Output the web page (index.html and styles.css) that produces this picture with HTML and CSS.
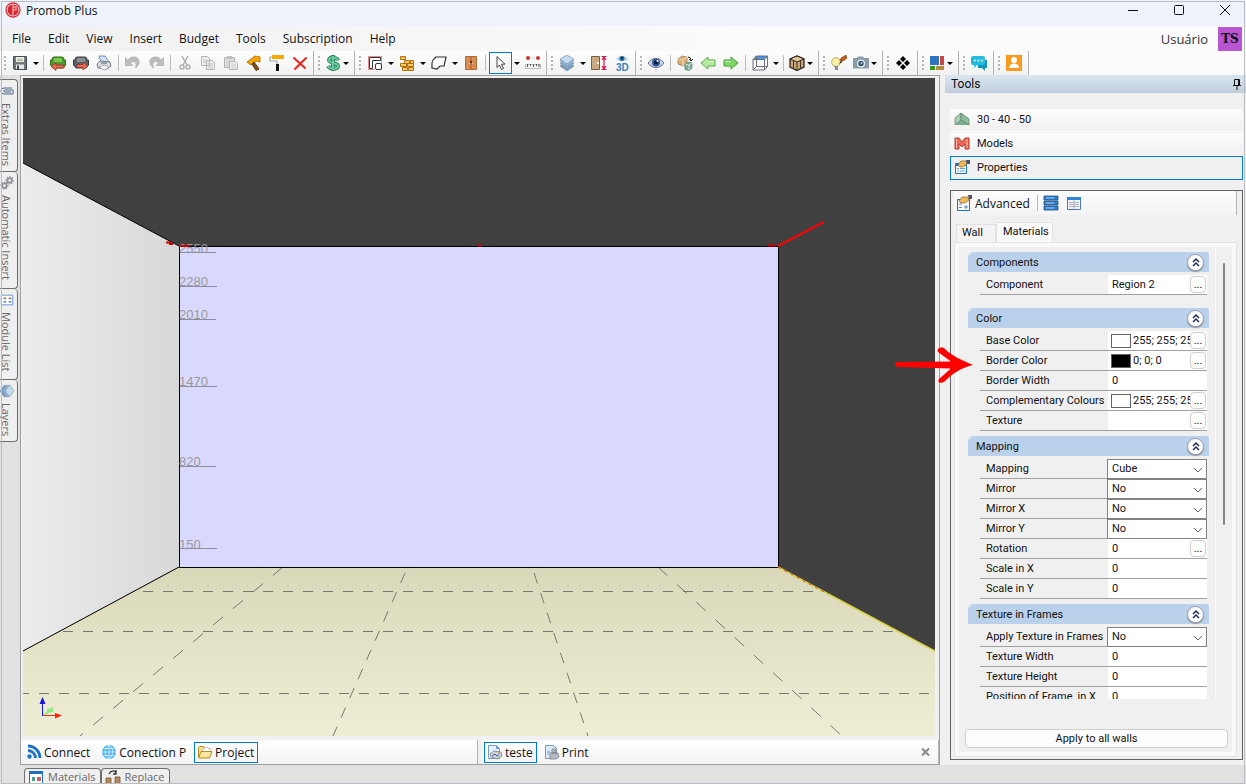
FILE: index.html
```
<!DOCTYPE html>
<html lang="en">
<head>
    <meta charset="UTF-8">
    <meta name="viewport" content="width=device-width, initial-scale=1.0">
    <title>Promob Plus</title>
    <link rel="stylesheet" href="styles.css">
</head>
<body>
    <div class="window">
        <header class="titlebar">
            <svg class="logo" viewBox="0 0 16 16"><circle cx="8" cy="8" r="7" fill="#fbe9ea" stroke="#d8303a" stroke-width="1.3"/><circle cx="8" cy="8" r="5.5" fill="#d9242f"/><path d="M8 3v10M8 5h3v3H8" fill="none" stroke="#f7b9bc" stroke-width="1.2"/></svg>
            <span class="title">Promob Plus</span>
            <div class="window-buttons">
                <button class="win-btn" aria-label="Minimize"><svg viewBox="0 0 12 12"><path d="M1 6.500h10" stroke="#111"/></svg></button>
                <button class="win-btn" aria-label="Maximize"><svg viewBox="0 0 12 12"><rect x="1.500" y="1.500" width="9" height="9" rx="1" fill="none" stroke="#111"/></svg></button>
                <button class="win-btn" aria-label="Close"><svg viewBox="0 0 12 12"><path d="M1 1l10 10M11 1L1 11" stroke="#111"/></svg></button>
            </div>
        </header>

        <div class="menubar">
            <nav class="menu">
                <button>File</button>
                <button>Edit</button>
                <button>View</button>
                <button>Insert</button>
                <button>Budget</button>
                <button>Tools</button>
                <button>Subscription</button>
                <button>Help</button>
            </nav>
            <div class="user">
                <span>Usuário</span>
                <span class="avatar">TS</span>
            </div>
        </div>

        <div class="toolbar">
            <div class="group">
                <i class="grip"></i>
                <button class="tool" aria-label="Save"><svg viewBox="0 0 16 16"><path d="M1.500 1.500h13v13h-12l-1-1z" fill="#70787c" stroke="#454d50"/><path d="M4 2h8v5H4z" fill="#f2f4e8"/><path d="M5 4h6M5 5.500h6" stroke="#a5aa9b"/><path d="M4 9.500h8V14H4z" fill="#e3e7e6"/><path d="M5 10.500h2V14H5z" fill="#3e464a"/></svg></button>
                <button class="caret" aria-label="Save options"></button>
                <i class="sep"></i>
                <button class="tool" aria-label="Import"><svg viewBox="0 0 16 16"><path d="M4 2h8q2 0 2 3h1.500v5L13 13H3L.5 10V5H2q0-3 2-3z" fill="#4d9b2e" stroke="#2e6a18"/><path d="M4 3h8v4H4z" fill="#7cc84d"/><path d="M1 11.500l5-4v2.500h8v3H6v2.500z" fill="#e56a50" stroke="#962d1d" stroke-width=".7"/></svg></button>
                <button class="tool" aria-label="Export"><svg viewBox="0 0 16 16"><path d="M4 2h8q2 0 2 3h1.500v5L13 13H3L.5 10V5H2q0-3 2-3z" fill="#5c6064" stroke="#3a3d40"/><path d="M4 3h8v4H4z" fill="#8b9095"/><path d="M15 11l-5-4v2.500H4v3h6V15z" fill="#ea6c55" stroke="#962d1d" stroke-width=".7"/></svg></button>
                <button class="tool" aria-label="Print"><svg viewBox="0 0 16 16"><path d="M3 1h6l4 6H5z" fill="#cfe1f7" stroke="#7590b8"/><path d="M1 9l3-3 10 1 1 4-4 3-9-1z" fill="#d6d9dd" stroke="#7c8289"/><path d="M3 12l6-2 4 3-5 2z" fill="#f8f9fa" stroke="#8e959b" stroke-width=".7"/><path d="M5 8h6" stroke="#606870"/></svg></button>
                <i class="sep"></i>
                <button class="tool" aria-label="Undo"><svg viewBox="0 0 16 16"><path d="M0 2.500v8h8L5.500 8c3-3 7-1.500 5 5 6-4 4.500-12-3-11-2 .3-3.500 1.500-4.700 3z" fill="#bcbcbc" stroke="#a5a5a5" stroke-width=".6"/></svg></button>
                <button class="tool" aria-label="Redo"><svg viewBox="0 0 16 16"><path d="M16 2.500v8H8L10.500 8c-3-3-7-1.500-5 5-6-4-4.500-12 3-11 2 .3 3.500 1.500 4.700 3z" fill="#bcbcbc" stroke="#a5a5a5" stroke-width=".6"/></svg></button>
                <i class="sep"></i>
                <button class="tool" aria-label="Cut"><svg viewBox="0 0 16 16"><path d="M5 1l5 9M11 1L6 10" stroke="#b0b0b0" stroke-width="1.500"/><circle cx="5" cy="12" r="2" fill="none" stroke="#b0b0b0" stroke-width="1.500"/><circle cx="11" cy="12" r="2" fill="none" stroke="#b0b0b0" stroke-width="1.500"/></svg></button>
                <button class="tool" aria-label="Copy"><svg viewBox="0 0 16 16"><path d="M1.500 1.500h6l2 2v7h-8zM6.500 5.500h6l2 2v7h-8z" fill="#ececec" stroke="#b5b5b5"/><path d="M3 5h3M3 7h3M8 9h5M8 11h5M8 13h5" stroke="#c8c8c8"/></svg></button>
                <button class="tool" aria-label="Paste"><svg viewBox="0 0 16 16"><path d="M1.500 2.500h10v10h-10z" fill="#d9d9d9" stroke="#b5b5b5"/><path d="M4 1h5v3H4z" fill="#c0c0c0"/><path d="M6.500 6.500h6l2 2v6h-8z" fill="#f1f1f1" stroke="#b5b5b5"/><path d="M8 9h5M8 11h5M8 13h5" stroke="#c8c8c8"/></svg></button>
                <button class="tool" aria-label="Hammer"><svg viewBox="0 0 16 16"><path d="M1 7l8-6 5 1v5l-4-1-5 4z" fill="#f0a608" stroke="#c27a00"/><path d="M8 7l5 7-3 1.500L6 9z" fill="#7c4e1c" stroke="#5a3510"/></svg></button>
                <button class="tool" aria-label="Paint roller"><svg viewBox="0 0 16 16"><path d="M3 0h12v4H3z" fill="#f7a900"/><path d="M3 2H1v4h7v4" fill="none" stroke="#a4a9ad" stroke-width="1.200"/><path d="M7 9h3v7H7z" fill="#111"/></svg></button>
                <button class="tool" aria-label="Delete"><svg viewBox="0 0 16 16"><path d="M2 3l11 10M14 3L3 14" stroke="#ee2018" stroke-width="1.900" stroke-linecap="round"/></svg></button>
            </div>
            <div class="group">
                <i class="grip"></i>
                <button class="tool drop" aria-label="Prices"><svg viewBox="0 0 16 16"><path d="M13 5.500C12 2 4 1.500 4 5s9 2.500 9 6-8 3.500-10 0M8 0v16" fill="none" stroke="#2f8a62" stroke-width="4"/><path d="M13 5.500C12 2 4 1.500 4 5s9 2.500 9 6-8 3.500-10 0M8 1v14" fill="none" stroke="#6cc69c" stroke-width="2"/></svg></button>
            </div>
            <div class="group">
                <i class="grip"></i>
                <button class="tool" aria-label="Walls"><svg viewBox="0 0 16 16"><path d="M1 1.500h14M1.500 1v14M14.500 1v14M1 14.500h7" stroke="#e29090"/><path d="M2.500 13.500v-11h11v3H5.500v8z" fill="#fff" stroke="#333"/><rect x="8.500" y="8.500" width="6" height="6" rx="1.500" fill="#fff" stroke="#333"/></svg></button>
                <button class="caret" aria-label="Wall options"></button>
                <button class="tool" aria-label="Bricks"><svg viewBox="0 0 16 16"><path d="M1.500 1.500h5v3h-5zM5.500 5.500h5v3h-5zM11.500 5.500h3v3h-3zM1.500 8.500h6v3h-6zM8.500 8.500h6v3h-6zM3.500 12.500h5v3h-5zM9.500 12.500h5v3h-5z" fill="#fbc665" stroke="#b0700c"/></svg></button>
                <button class="caret" aria-label="Brick options"></button>
                <button class="tool" aria-label="Shape"><svg viewBox="0 0 16 16"><path d="M5 2h10l-2 9H9l-3 3-5-1v-5c0-3 2-4 4-6z" fill="#fff" stroke="#333" stroke-width="1.200"/></svg></button>
                <button class="caret" aria-label="Shape options"></button>
                <button class="tool" aria-label="Cabinet"><svg viewBox="0 0 16 16"><path d="M2.500 1.500h11v13h-11z" fill="#d88c53" stroke="#b26b36"/><path d="M8 2v12" stroke="#9d5a2b"/><path d="M6 8h1M9 8h1" stroke="#fff"/><circle cx="8" cy="7" r="1.300" fill="#5e3417"/></svg></button>
                <i class="sep"></i>
                <button class="tool selected" aria-label="Select"><svg viewBox="0 0 16 16"><path d="M4 1.500v11l2.500-2.500 2 4.500 2-1-2-4.300h3.500z" fill="#fff" stroke="#444"/></svg></button>
                <button class="caret" aria-label="Select options"></button>
                <button class="tool" aria-label="Measure"><svg viewBox="0 0 16 16"><circle cx="3" cy="3" r="2" fill="#c63a34"/><circle cx="13" cy="3" r="2" fill="#c63a34"/><path d="M5 3h6" stroke="#bbb" stroke-dasharray="1 1"/><path d="M.5 9.500h15v4H.500z" fill="#f2f2f2" stroke="#bbb"/><path d="M2.500 9v3M5.500 9v2M8.500 9v3M11.500 9v2M14 9v3" stroke="#555"/></svg></button>
            </div>
            <div class="group">
                <i class="grip"></i>
                <button class="tool" aria-label="Layers"><svg viewBox="0 0 16 16"><g stroke="#6886a6" stroke-width=".6"><path d="M8 7l7 4-7 5-7-5z" fill="#7c9fc4"/><path d="M8 4.500l7 4-7 5-7-5z" fill="#8fb0d1"/><path d="M8 2l7 4-7 5-7-5z" fill="#a3c0dc"/><path d="M8 0l7 4-7 5-7-5z" fill="#c3d9ec"/></g></svg></button>
                <button class="caret" aria-label="Layer options"></button>
                <button class="tool" aria-label="Door height"><svg viewBox="0 0 16 16"><path d="M.5 1.500h8v13h-8z" fill="#c9a981" stroke="#7d5e3c"/><circle cx="7" cy="8" r="1" fill="#fff"/><path d="M10.500 1.500h5M10.500 14.500h5M13 2v12M11 5l2-3 2 3M11 11l2 3 2-3" fill="none" stroke="#cf1747" stroke-width="1.200"/></svg></button>
                <button class="tool" aria-label="3D view"><svg viewBox="0 0 16 16"><path d="M2 4c3-4 9-4 12 0-3 3-9 3-12 0z" fill="#bdd6e8"/><circle cx="8" cy="3.500" r="2.500" fill="#27699b"/><circle cx="8" cy="3" r="1" fill="#123"/><text x="2" y="15.500" class="icon-text">3D</text></svg></button>
            </div>
            <div class="group">
                <i class="grip"></i>
                <button class="tool" aria-label="Visibility"><svg viewBox="0 0 16 16"><path d="M0 8c4-6 12-6 16 0-4 6-12 6-16 0z" fill="#c9d5e6" stroke="#67748c"/><circle cx="8" cy="7.500" r="4" fill="#2e589e"/><circle cx="8" cy="7.500" r="2" fill="#0b1633"/><circle cx="9.500" cy="6" r="1" fill="#fff"/></svg></button>
                <i class="sep"></i>
                <button class="tool" aria-label="Rotate modules"><svg viewBox="0 0 16 16"><path d="M1 4l4-3 5 1v6l-4 3-5-2z" fill="#d8b07a" stroke="#98723d" stroke-width=".7"/><path d="M1 4l5 1 4-3M6 5v6" fill="none" stroke="#f3dcb6"/><path d="M8 9l3-2 4 1v5l-3 2.500-4-1z" fill="#7fae98" stroke="#4c7964" stroke-width=".7"/><path d="M8 9l4 1 3-2M12 10v5" fill="none" stroke="#c8e3d6"/><path d="M11 2q3 0 3 3M12 4l2 2 2-2" fill="none" stroke="#222"/></svg></button>
                <button class="tool" aria-label="Previous"><svg viewBox="0 0 16 16"><path d="M1 8l7-6v3h7v6H8v3z" fill="#b5e8a0" stroke="#5bb045"/><path d="M8.500 6.500H14" stroke="#dff7d3"/></svg></button>
                <button class="tool" aria-label="Next"><svg viewBox="0 0 16 16"><path d="M15 8L8 2v3H1v6h7v3z" fill="#7ed766" stroke="#45a035"/><path d="M2 6.500h6" stroke="#c5efb6"/></svg></button>
                <i class="sep"></i>
                <button class="tool" aria-label="Perspective"><svg viewBox="0 0 16 16"><path d="M4 1h11.500l-3 3.500H1z" fill="#3f97ea"/><path d="M1 4.500L4.500 1h11v10.500l-3 3.500H1zM1 4.500h11.500V15M12.500 4.500l3-3.500M4.500 1v10.500h11M1 15l3.500-3.500" fill="none" stroke="#6b7178"/></svg></button>
                <button class="caret" aria-label="Perspective options"></button>
                <i class="sep"></i>
                <button class="tool drop" aria-label="Render mode"><svg viewBox="0 0 16 16"><path d="M1 4l7-3 7 3v8l-7 3.500L1 12z" fill="#c9a57a" stroke="#2c241c" stroke-width="1.300"/><path d="M1 4l7 3 7-3-7-3z" fill="#e2c79f" stroke="#2c241c"/><path d="M8 7v8M4.500 5.500V14M11.500 5.500V14" stroke="#4b3a28"/></svg></button>
            </div>
            <div class="group">
                <i class="grip"></i>
                <button class="tool" aria-label="Lighting"><svg viewBox="0 0 16 16"><circle cx="5" cy="7" r="4.300" fill="#fbf0a0" stroke="#b6ae72"/><path d="M3.500 11h3.500v4h-3z" fill="#8c8c8c"/><path d="M9 6l1-3 5-3 1 3-4 3z" fill="#c25b14" stroke="#7a3606" stroke-width=".6"/><path d="M8 9l2-3 1.500 1z" fill="#222"/></svg></button>
                <button class="tool drop" aria-label="Camera"><svg viewBox="0 0 16 16"><path d="M0 3h4l1-1.500h5L11 3h5v10.500H0z" fill="#8a9da7"/><circle cx="8" cy="8.500" r="4" fill="#e5edf0"/><circle cx="8" cy="8.500" r="2.700" fill="#36536b"/><circle cx="8.500" cy="8" r="1" fill="#b9d6e9"/></svg></button>
            </div>
            <div class="group">
                <i class="grip"></i>
                <button class="tool" aria-label="Modules"><svg viewBox="0 0 16 16"><path d="M8 1l3 3-3 3-3-3zM4 5l3 3-3 3-3-3zM12 5l3 3-3 3-3-3zM8 9l3 3-3 3-3-3z" fill="#000"/></svg></button>
            </div>
            <div class="group">
                <i class="grip"></i>
                <button class="tool drop" aria-label="Layout"><svg viewBox="0 0 16 16"><path d="M1 1h9v9H1z" fill="#2f74bf"/><path d="M11 1h4v9h-4z" fill="#c84640"/><path d="M1 11h5v4H1z" fill="#37951f"/><path d="M7 11h8v4H7z" fill="#b08b43"/></svg></button>
            </div>
            <div class="group">
                <i class="grip"></i>
                <button class="tool" aria-label="Chat"><svg viewBox="0 0 16 16"><path d="M7 5h9v8h-2v3l-3-3H7z" fill="#1595b8"/><path d="M2 1h10a2 2 0 0 1 2 2v5a2 2 0 0 1-2 2H6l-3 3v-3H2a2 2 0 0 1-2-2V3a2 2 0 0 1 2-2z" fill="#23bbdf"/><path d="M3 5.500h2M6.500 5.500h2M10 5.500h2" stroke="#fff" stroke-width="1.600"/></svg></button>
            </div>
            <div class="group">
                <i class="grip"></i>
                <button class="tool" aria-label="Account"><svg viewBox="0 0 16 16"><path d="M0 0h16v16H0z" fill="#f89a1c"/><circle cx="8" cy="5" r="3" fill="#fff"/><path d="M3 13c0-6 10-6 10 0z" fill="#fff"/></svg></button>
            </div>
        </div>

        <div class="workspace">
            <aside class="rail">
                <button class="side-tab"><svg viewBox="0 0 14 14"><path d="M12 4H4a3 3 0 0 0 0 6h9M13 10V6H5a1 1 0 0 0 0 2h6" fill="none" stroke="#4a6488"/></svg>Extras Items</button>
                <button class="side-tab auto"><svg viewBox="0 0 16 16"><g fill="none" stroke="#8f8f97" stroke-width="2"><circle cx="11" cy="5" r="2.500"/><circle cx="5" cy="11" r="2.500"/></g><g fill="none" stroke="#8f8f97" stroke-width="1.500" stroke-dasharray="1.500 1.500"><circle cx="11" cy="5" r="4"/><circle cx="5" cy="11" r="4"/></g></svg>Automatic Insert</button>
                <button class="side-tab modules"><svg viewBox="0 0 16 16"><path d="M1.500 2.500h13v11h-13z" fill="#fff" stroke="#5b8fcb"/><path d="M4 5h3v2H4zM10 5h3v2h-3z" fill="#9d7d4d"/><path d="M4 10h3M10 10h3" stroke="#6b94bf" stroke-width="2"/></svg>Module List</button>
                <button class="side-tab layers"><svg viewBox="0 0 16 16"><g stroke="#6886a6" stroke-width=".6"><path d="M9 8l-4 7-5-7 5-7z" fill="#7c9fc4"/><path d="M11 8l-4 7-5-7 5-7z" fill="#8fb0d1"/><path d="M13 8l-4 7-5-7 5-7z" fill="#a3c0dc"/><path d="M16 8l-5 7-5-7 5-7z" fill="#c3d9ec"/></g></svg>Layers</button>
            </aside>

            <main class="stage">
                <svg class="scene" viewBox="0 0 912 658" preserveAspectRatio="xMinYMin slice">
                    <defs>
                        <linearGradient id="wall" x1="0" x2="1" y1="0" y2="0">
                            <stop offset="0" stop-color="#ececec"/>
                            <stop offset="1" stop-color="#d8d8d8"/>
                        </linearGradient>
                        <linearGradient id="floor" x1="0" x2="0" y1="0" y2="1">
                            <stop offset="0" stop-color="#d9d8b9"/>
                            <stop offset="1" stop-color="#efeed5"/>
                        </linearGradient>
                        <clipPath id="floor-area"><path d="M156 489h599l157 84v85H0v-85z"/></clipPath>
                    </defs>
                    <rect width="912" height="658" fill="#404040"/>
                    <path d="M0 85l156 83v321L0 573z" fill="url(#wall)"/>
                    <path d="M156 168h599v321H156z" fill="#d9d9ff"/>
                    <path d="M156 489h599l157 84v85H0v-85z" fill="url(#floor)"/>
                    <g clip-path="url(#floor-area)" stroke="#77776f" fill="none">
                        <path d="M0 513.500h912M0 553.500h912" stroke-dasharray="10 10"/>
                        <path d="M-4 615.500h916" stroke-dasharray="10 10"/>
                        <path d="M260 489L57 658M635 489l184 169" stroke-dasharray="13 13"/>
                        <path d="M382 495l-72 163M511 495l54 163" stroke-dasharray="11 10"/>
                    </g>
                    <path d="M0 85l156 83M0 573l156-84" stroke="#000"/>
                    <path d="M156.500 168.500h599v321h-599z" fill="none" stroke="#000"/>
                    <path d="M755 489l157 84" stroke="#d9d23c" stroke-width="1.500"/>
                    <path d="M755 489l50 27" stroke="#e8442c" stroke-dasharray="3 4"/>
                    <g class="levels">
                        <text x="156" y="175">2550</text>
                        <text x="156" y="208">2280</text>
                        <text x="156" y="241">2010</text>
                        <text x="156" y="308">1470</text>
                        <text x="156" y="388">820</text>
                        <text x="156" y="471">150</text>
                    </g>
                    <path d="M157 174.500h36M157 208.500h37M157 241.500h36M157 308.500h37M157 388.500h36M157 470.500h37" stroke="#8f8f99"/>
                    <path d="M143 164.500h5M146 166h4M157 168h9M454 167.500h5M745 167.500h8" stroke="#c00" stroke-width="2"/>
                    <path d="M755 168l46-24" stroke="#f00" stroke-width="2"/>
                    <path d="M21 637l9-7" stroke="#90ee80" stroke-width="2"/>
                    <path d="M24 633l6-1" stroke="#90ee80" stroke-width="4"/>
                    <path d="M19.500 638v-14" stroke="#1414e6"/>
                    <path d="M16.500 626l3-7 3 7z" fill="#1414e6"/>
                    <path d="M20 637.500h14" stroke="#f20"/>
                    <path d="M32 635l7 2.500-7 3z" fill="#f20"/>
                </svg>
                <div class="stage-bar">
                    <div class="strip">
                        <button class="strip-btn"><svg viewBox="0 0 16 16"><circle cx="3.500" cy="12.500" r="2.200" fill="#1d74c5"/><path d="M2 6.500a7.500 7.500 0 0 1 7.500 7.500M2 2a12 12 0 0 1 12 12" fill="none" stroke="#1d74c5" stroke-width="2.800"/></svg>Connect</button>
                        <button class="strip-btn"><svg viewBox="0 0 16 16"><circle cx="8" cy="8" r="7" fill="#54b3e6"/><path d="M1 8h14M8 1v14M2.500 4.500h11M2.500 11.500h11M8 1c-5 4-5 10 0 14M8 1c5 4 5 10 0 14" fill="none" stroke="#d4effc" stroke-width=".8"/></svg>Conection P</button>
                        <button class="strip-btn active"><svg viewBox="0 0 16 16"><path d="M1.500 13V3.500l1-1h4l1.500 2h5V8" fill="#f7dc83" stroke="#ae872a"/><path d="M5 6l5-3 4 3-1 5H5z" fill="#fff" stroke="#aaa" stroke-width=".6"/><path d="M1.500 14L4 7.500h11L12.500 14z" fill="#fbe79b" stroke="#b58b27"/></svg>Project</button>
                    </div>
                    <div class="strip">
                        <button class="strip-btn active"><svg viewBox="0 0 16 16"><path d="M1.500 1.500h8l3 3v10h-11z" fill="#e4effb" stroke="#7d9dc4"/><path d="M9 1l4 4H9z" fill="#739dcb"/><path d="M3 10l4-3 7 1 1 4-4 3-7-2z" fill="#cfd2d6" stroke="#7b7f84" stroke-width=".8"/><path d="M5 12l3-2 2 2 2-1" stroke="#3c62b0" fill="none"/><path d="M11 9h2" stroke="#c77c35"/></svg>teste</button>
                        <button class="strip-btn"><svg viewBox="0 0 16 16"><path d="M1.500 1.500h8l3 3v10h-11z" fill="#dce9f8" stroke="#7d9dc4"/><path d="M8 5h4v4H8zM6 9h8l1 4-3 2H6z" fill="#b6bbc1" stroke="#777d84" stroke-width=".7"/><path d="M3 7h3v4H3z" fill="#a9c5e4"/></svg>Print</button>
                        <button class="strip-close" aria-label="Close view"><svg viewBox="0 0 10 10"><path d="M1 1.500l7 7M8 1.500l-7 7" stroke="#8a8a8a" stroke-width="2"/></svg></button>
                    </div>
                </div>
            </main>

            <aside class="dock">
                <div class="dock-title">
                    <span>Tools</span>
                    <button class="pin" aria-label="Pin"><svg viewBox="0 0 10 12"><path d="M2.500 7V1.500h5V7M1 7.500h8M6.500 1v6M5 8v4" fill="none" stroke="#111"/></svg></button>
                </div>
                <div class="dock-list">
                    <button class="dock-item"><svg viewBox="0 0 16 16"><path d="M1 7l6-5 8 6v6H1z" fill="#7bae8d"/><path d="M1 7l6-5v7l-6 5zM7 9l8 5" fill="#a9cfb6" stroke="#66806d" stroke-width=".7"/><path d="M7 2l8 6v6L7 9z" fill="#8dbf9e" stroke="#66806d" stroke-width=".7"/></svg>30 - 40 - 50</button>
                    <button class="dock-item"><svg viewBox="0 0 16 16"><path d="M1 14V3h4l3 4 3-4h4v11h-4V9l-3 3-3-3v5z" fill="#ec6a55" stroke="#b73b31"/><path d="M2.500 4v9M13 4v9" stroke="#f7b1a2"/></svg>Models</button>
                    <button class="dock-item active"><svg viewBox="0 0 16 16"><path d="M1.500 4.500h11v10h-11z" fill="#fff" stroke="#1c6fc4"/><path d="M2 5h10v2H2z" fill="#1c6fc4"/><path d="M3 9.500h2M6 9.500h5M3 12h2M6 12h5" stroke="#5e9ddd"/><path d="M4 6l3-4h5l1 3-4 3H6z" fill="#edb95b" stroke="#8a6120" stroke-width=".7"/><path d="M12 1h4v4h-3z" fill="#45536b"/></svg>Properties</button>
                </div>

                <section class="panel">
                    <div class="panel-tools">
                        <button class="advanced"><svg viewBox="0 0 16 16"><path d="M1.500 4.500h12v11h-12z" fill="#fff" stroke="#1c6fc4"/><path d="M3 9h3M3 12.500h3M8 12h4M10 10v4" stroke="#3d86d4"/><path d="M3 6l3-4h6l1 3-4 3H5z" fill="#edb95b" stroke="#8a6120" stroke-width=".7"/><path d="M12 0h4v4h-3z" fill="#45536b"/></svg>Advanced</button>
                        <i class="sep"></i>
                        <button class="tool" aria-label="Categorized"><svg viewBox="0 0 16 16"><path d="M1 1h14v4H1zM1 6h14v4H1zM1 11h14v4H1z" fill="#2f83d6" stroke="#2c4d70" stroke-width=".8"/><path d="M3 3h8M3 8h8M3 13h8" stroke="#9cd0ff"/></svg></button>
                        <button class="tool" aria-label="Table view"><svg viewBox="0 0 16 16"><path d="M1.500 2.500h13v12h-13z" fill="#f5f5f5" stroke="#4878a8"/><path d="M1 2h14v3H1z" fill="#2f83d6"/><path d="M3 7.500h10M3 9.500h10M3 11.500h10M8 5v9" stroke="#a8b2bd"/></svg></button>
                    </div>
                    <div class="tabs">
                        <button class="tab">Wall</button>
                        <button class="tab current">Materials</button>
                    </div>
                    <div class="page">
                        <div class="props-area">
                            <div class="props">
                                <section class="props-group wide">
                                    <h2>Components <button class="fold" aria-label="Collapse Components"><svg viewBox="0 0 10 10"><path d="M2 5l3-3 3 3M2 9l3-3 3 3"/></svg></button></h2>
                                    <div class="row"><label for="component">Component</label><div class="value"><input id="component" type="text" value="Region 2"><button class="more">...</button></div></div>
                                </section>
                                <section class="props-group">
                                    <h2>Color <button class="fold" aria-label="Collapse Color"><svg viewBox="0 0 10 10"><path d="M2 5l3-3 3 3M2 9l3-3 3 3"/></svg></button></h2>
                                    <div class="row"><label for="base">Base Color</label><div class="value"><i class="swatch"></i><input id="base" type="text" value="255; 255; 255"><button class="more">...</button></div></div>
                                    <div class="row"><label for="border">Border Color</label><div class="value"><i class="swatch black"></i><input id="border" type="text" value="0; 0; 0"><button class="more">...</button></div></div>
                                    <div class="row"><label for="border-width">Border Width</label><div class="value"><input id="border-width" type="text" value="0"></div></div>
                                    <div class="row"><label for="complementary">Complementary Colours</label><div class="value"><i class="swatch"></i><input id="complementary" type="text" value="255; 255; 255"><button class="more">...</button></div></div>
                                    <div class="row"><label for="texture">Texture</label><div class="value"><input id="texture" type="text" value=""><button class="more">...</button></div></div>
                                </section>
                                <section class="props-group">
                                    <h2>Mapping <button class="fold" aria-label="Collapse Mapping"><svg viewBox="0 0 10 10"><path d="M2 5l3-3 3 3M2 9l3-3 3 3"/></svg></button></h2>
                                    <div class="row"><label for="mapping">Mapping</label><div class="value pick"><select id="mapping"><option>Cube</option></select><svg viewBox="0 0 10 6"><path d="M1 1l4 4 4-4"/></svg></div></div>
                                    <div class="row"><label for="mirror">Mirror</label><div class="value pick"><select id="mirror"><option>No</option><option>Yes</option></select><svg viewBox="0 0 10 6"><path d="M1 1l4 4 4-4"/></svg></div></div>
                                    <div class="row"><label for="mirror-x">Mirror X</label><div class="value pick"><select id="mirror-x"><option>No</option><option>Yes</option></select><svg viewBox="0 0 10 6"><path d="M1 1l4 4 4-4"/></svg></div></div>
                                    <div class="row"><label for="mirror-y">Mirror Y</label><div class="value pick"><select id="mirror-y"><option>No</option><option>Yes</option></select><svg viewBox="0 0 10 6"><path d="M1 1l4 4 4-4"/></svg></div></div>
                                    <div class="row"><label for="rotation">Rotation</label><div class="value"><input id="rotation" type="text" value="0"><button class="more">...</button></div></div>
                                    <div class="row"><label for="scale-x">Scale in X</label><div class="value"><input id="scale-x" type="text" value="0"></div></div>
                                    <div class="row"><label for="scale-y">Scale in Y</label><div class="value"><input id="scale-y" type="text" value="0"></div></div>
                                </section>
                                <section class="props-group">
                                    <h2>Texture in Frames <button class="fold" aria-label="Collapse Texture in Frames"><svg viewBox="0 0 10 10"><path d="M2 5l3-3 3 3M2 9l3-3 3 3"/></svg></button></h2>
                                    <div class="row"><label for="apply-frames">Apply Texture in Frames</label><div class="value pick"><select id="apply-frames"><option>No</option><option>Yes</option></select><svg viewBox="0 0 10 6"><path d="M1 1l4 4 4-4"/></svg></div></div>
                                    <div class="row"><label for="texture-width">Texture Width</label><div class="value"><input id="texture-width" type="text" value="0"></div></div>
                                    <div class="row"><label for="texture-height">Texture Height</label><div class="value"><input id="texture-height" type="text" value="0"></div></div>
                                    <div class="row"><label for="frame-x">Position of Frame, in X</label><div class="value"><input id="frame-x" type="text" value="0"></div></div>
                                </section>
                            </div>
                            <div class="scrollbar"><i class="thumb"></i></div>
                        </div>
                        <button class="apply">Apply to all walls</button>
                    </div>
                </section>
            </aside>

            <svg class="arrow" viewBox="0 0 80 40"><path d="M3 17L57 16.500 44 7C42 3 48 1 51 4c7 7 15 10 28 16-13 3-22 10-29 17-4 2-7 0-5-3l12-10.500L4 22c-4-.5-4-4.500-1-5z" fill="#f00"/></svg>
        </div>

        <footer class="bottom-tabs">
            <button class="bottom-tab"><svg viewBox="0 0 16 16"><path d="M1.500 2.500h13v13h-13z" fill="#fff" stroke="#1c6fc4"/><path d="M1 2h14v3H1z" fill="#1c6fc4"/><path d="M4 8h3v4H4z" fill="#4aa283"/><path d="M9 8h4v4H9z" fill="#d25b5b"/></svg>Materials</button>
            <button class="bottom-tab"><svg viewBox="0 0 16 16"><path d="M1 9h5v6H1zM10 8h5v7h-5z" fill="#b58a5b" stroke="#705030" stroke-width=".8"/><path d="M4 5c2-4 6-4 7-1M11 1v4H8" fill="none" stroke="#333" stroke-width="1.300"/></svg>Replace</button>
        </footer>
    </div>
</body>
</html>
```
FILE: styles.css
```
* {
    box-sizing: border-box;
}

body {
    margin: 0;
    font-family: "Open Sans", "Noto Sans", sans-serif;
    font-size: 12px;
    color: #111;
    background-color: #e1e1e1;
}

button {
    font: inherit;
    color: inherit;
    background: none;
    border: none;
    padding: 0;
    white-space: nowrap;
}

button svg {
    width: 16px;
    height: 16px;
    flex: none;
}

.window {
    position: relative;
    display: flex;
    flex-direction: column;
    height: 100vh;
    overflow: hidden;
}

/* thin frame drawn over the content */
.window::after {
    content: "";
    position: absolute;
    inset: 1px 1px 0 1px;
    border: 1px solid #b9bdc1;
    pointer-events: none;
}

.titlebar {
    display: flex;
    align-items: center;
    height: 26px;
    flex: none;
    padding: 0 3px 6px 5px;
    background-color: #eef3fb;
}

.logo {
    width: 16px;
    height: 16px;
}

.title {
    margin-left: 5px;
}

.window-buttons {
    display: flex;
    margin-left: auto;
}

.win-btn {
    width: 46px;
    height: 20px;
    display: flex;
    align-items: center;
    justify-content: center;
}

.win-btn:last-child {
    width: 36px;
    margin-left: 5px;
}

.win-btn svg {
    width: 12px;
    height: 12px;
}

.menubar {
    display: flex;
    justify-content: space-between;
    height: 25px;
    flex: none;
    padding: 0 4px 0 12px;
    background: linear-gradient(to right, #f0f0f0, #fbfbfb 60%);
}

.menu {
    display: flex;
    align-items: center;
    gap: 17px;
}

.menu button:hover {
    background-color: #dcebf8;
}

.user {
    display: flex;
    align-items: center;
    gap: 10px;
    font-size: 13px;
    color: #333;
}

.avatar {
    display: flex;
    justify-content: center;
    align-items: center;
    width: 24px;
    height: 24px;
    background-color: #ba55d3;
    color: #111;
    font-family: "DejaVu Serif", serif;
    font-size: 12px;
    font-weight: bold;
}

.toolbar {
    display: flex;
    height: 24px;
    flex: none;
    padding-left: 2px;
    background-color: #fbfbfb;
}

.group {
    display: flex;
    align-items: center;
    min-width: 35px;
    padding-right: 2px;
    border-right: 1px solid #b4b4b4;
    background: linear-gradient(#fdfdfd, #f1f1f1);
}

.grip {
    width: 2px;
    height: 15px;
    margin: 0 2px;
    background: repeating-linear-gradient(#b5b5b5 0 2px, transparent 2px 4px);
}

.group + .group .grip {
    margin-left: 4px;
}

.tool {
    display: flex;
    align-items: center;
    justify-content: center;
    width: 23px;
    height: 22px;
}

.tool:hover {
    background-color: #dcebf8;
}

.tool.selected {
    margin-left: 1px;
    border: 1px solid #0078d7;
}

.drop {
    width: 30px;
}

.caret {
    display: flex;
    align-items: center;
    justify-content: center;
    width: 9px;
    height: 22px;
}

.caret::after,
.drop::after {
    content: "";
    border: 3px solid transparent;
    border-top-color: #000;
    border-bottom: none;
}

.drop::after {
    margin-left: 2px;
}

.sep {
    width: 1px;
    height: 16px;
    margin: 0 2px 0 3px;
    background-color: #bcbcbc;
}

.icon-text {
    font: bold 10px "Liberation Sans", sans-serif;
    fill: #3e82b5;
}

.workspace {
    position: relative;
    display: flex;
    flex: 1;
    min-height: 0;
}

.rail {
    display: flex;
    flex-direction: column;
    align-items: flex-start;
    width: 20px;
    flex: none;
    padding-top: 4px;
    font-size: 11px;
}

.side-tab {
    display: flex;
    align-items: center;
    gap: 5px;
    width: 18px;
    height: 93px;
    padding: 4px 4px 4px 0;
    writing-mode: vertical-rl;
    color: #686868;
    background-color: #efefef;
    border: 1px solid #6e6e6e;
    border-left: none;
    border-radius: 0 4px 4px 0;
}

.side-tab svg {
    width: 14px;
    height: 14px;
}

.side-tab + .side-tab {
    border-top: none;
}

.side-tab.auto {
    height: 117px;
}

.side-tab.modules {
    height: 91px;
}

.side-tab.layers {
    height: 62px;
}

.stage {
    display: flex;
    flex-direction: column;
    flex: 1;
    min-width: 0;
    padding: 2px 0 0 2px;
    background-color: #f0f0f0;
    border: 1px solid #a0a0a0;
}

.scene {
    display: block;
    flex: 1;
    min-height: 0;
    width: calc(100% - 4px);
    margin-bottom: 4px;
}

.levels {
    font: 13px "Liberation Sans", sans-serif;
    fill: #999;
}

.stage-bar {
    display: flex;
    gap: 4px;
    height: 24px;
    margin-left: -2px;
}

.strip {
    display: flex;
    align-items: center;
    gap: 4px;
    flex: 1;
    padding: 0 2px;
    border-right: 1px solid #b4b4b4;
    background: linear-gradient(#fff, #f3f3f3);
}

.strip-btn {
    display: flex;
    align-items: center;
    gap: 2px;
    height: 21px;
    padding: 0 3px 0 2px;
    border: 1px solid transparent;
}

.strip-btn.active {
    border-color: #0078d7;
}

.strip-close {
    margin-left: auto;
    margin-right: 5px;
}

.strip-close svg {
    width: 10px;
    height: 10px;
}

.dock {
    display: flex;
    flex-direction: column;
    width: 306px;
    flex: none;
    padding: 0 3px 5px 10px;
    background-color: #f0f0f0;
    font-family: Roboto, "Liberation Sans", sans-serif;
    font-size: 11px;
}

.dock-title {
    display: flex;
    justify-content: space-between;
    align-items: center;
    height: 18px;
    flex: none;
    margin: 0 -3px 15px -5px;
    padding: 0 4px 0 6px;
    background: linear-gradient(#d9e6f2, #c0cedb);
    font-size: 12px;
}

.pin svg {
    display: block;
    width: 10px;
    height: 12px;
}

.dock-item {
    display: flex;
    align-items: center;
    gap: 7px;
    width: 100%;
    height: 24px;
    padding: 0 3px 2px;
    border: 1px solid transparent;
    background: linear-gradient(#fcfcfc, #f0f0f0);
}

.dock-item.active {
    border-color: #0078d7;
    background: #f0f0f0;
}

.panel {
    display: flex;
    flex-direction: column;
    flex: 1;
    min-height: 0;
    margin-top: 10px;
    padding: 0 5px 2px 3px;
    border: 1px solid #646464;
}

.panel-tools {
    display: flex;
    align-items: center;
    height: 24px;
    flex: none;
    margin-bottom: 7px;
    padding-left: 2px;
    border-right: 1px solid #b4b4b4;
    background: linear-gradient(#fdfdfd, #f3f3f3);
}

.advanced {
    display: flex;
    align-items: center;
    gap: 3px;
    margin-right: 4px;
    font-family: "Open Sans", "Noto Sans", sans-serif;
    font-size: 12px;
}

.tabs {
    display: flex;
    align-items: flex-end;
    padding-left: 2px;
    flex: none;
}

.tab {
    width: 40px;
    height: 18px;
    padding: 0 5px 2px;
    text-align: left;
    border: 1px solid #e2e2e2;
    border-bottom: none;
    background-color: #f3f3f3;
}

.tab.current {
    width: 57px;
    height: 20px;
    padding: 0 6px 3px;
    background-color: #f9f9f9;
}

.page {
    display: flex;
    flex-direction: column;
    flex: 1;
    min-height: 0;
    padding-bottom: 4px;
    border: 5px solid #f9f9f9;
    outline: 1px solid #e5e5e5;
    outline-offset: -1px;
}

.props-area {
    display: flex;
    flex: 1;
    min-height: 0;
    margin-bottom: 30px;
}

.props {
    flex: 1;
    min-width: 0;
    padding: 5px 6px 0 9px;
    overflow: hidden;
}

.props-group {
    padding-bottom: 5px;
}

.props-group.wide {
    padding-bottom: 13px;
}

.props-group h2 {
    display: flex;
    align-items: center;
    justify-content: space-between;
    height: 20px;
    margin: 0 0 3px;
    padding: 0 5px 0 8px;
    background-color: #b9d1ea;
    border-radius: 6px 3px 0 0;
    font-size: 11px;
    font-weight: normal;
}

.fold {
    display: flex;
    align-items: center;
    justify-content: center;
    width: 17px;
    height: 17px;
    background-color: #fff;
    border: 1px solid #9a9fa8;
    border-radius: 50%;
    box-shadow: 0 1px 1px #8a8f98;
}

.fold svg {
    width: 10px;
    height: 10px;
    fill: none;
    stroke: #1c2a60;
    stroke-width: 1.5;
}

.row {
    display: flex;
    height: 20px;
    margin: 0 2px 0 12px;
    border-bottom: 1px solid #a0a0a0;
}

.row label {
    flex: 1;
    padding-left: 6px;
    line-height: 20px;
    white-space: nowrap;
}

.value {
    position: relative;
    display: flex;
    align-items: center;
    width: 99px;
    height: 19px;
    background-color: #fff;
}

.value input {
    flex: 1;
    min-width: 0;
    height: 18px;
    padding: 0 0 0 4px;
    border: none;
    background: none;
    font: inherit;
    color: inherit;
}

.swatch {
    width: 20px;
    height: 14px;
    flex: none;
    margin-left: 3px;
    margin-right: -2px;
    border: 1px solid #646464;
    background-color: #fff;
}

.swatch.black {
    background-color: #000;
}

.more {
    width: 16px;
    height: 17px;
    flex: none;
    margin-right: 1px;
    border: 1px solid #cfcfcf;
    border-radius: 4px;
    background-color: #fdfdfd;
}

.pick {
    height: 20px;
    width: 100px;
}

.pick select {
    width: 100%;
    height: 20px;
    padding: 0 0 2px 4px;
    appearance: none;
    border: 1px solid #828282;
    border-radius: 0;
    background-color: #fff;
    font: inherit;
    color: inherit;
}

.pick svg {
    position: absolute;
    right: 4px;
    top: 8px;
    width: 10px;
    height: 6px;
    fill: none;
    stroke: #666;
    pointer-events: none;
}

.scrollbar {
    width: 17px;
    padding-top: 16px;
    border-left: 1px solid #fbfbfb;
}

.thumb {
    display: block;
    width: 2px;
    height: 60%;
    margin-left: 7px;
    background-color: #858585;
    border-radius: 1px;
}

.apply {
    height: 19px;
    flex: none;
    margin: 0 4px 0 6px;
    background-color: #fdfdfd;
    border: 1px solid #cfcfcf;
    border-radius: 4px;
}

/* callout pointing at Border Color */
.arrow {
    position: absolute;
    top: 270px;
    right: 272px;
    width: 80px;
    height: 40px;
    pointer-events: none;
}

.bottom-tabs {
    display: flex;
    height: 19px;
    flex: none;
    padding: 3px 0 0 24px;
    font-size: 11px;
}

.bottom-tab {
    display: flex;
    align-items: center;
    gap: 4px;
    height: 16px;
    padding: 0 4px 0 3px;
    line-height: 15px;
    color: #686868;
    background-color: #efefef;
    border: 1px solid #6e6e6e;
    border-bottom: none;
    border-radius: 4px 4px 0 0;
}
```
